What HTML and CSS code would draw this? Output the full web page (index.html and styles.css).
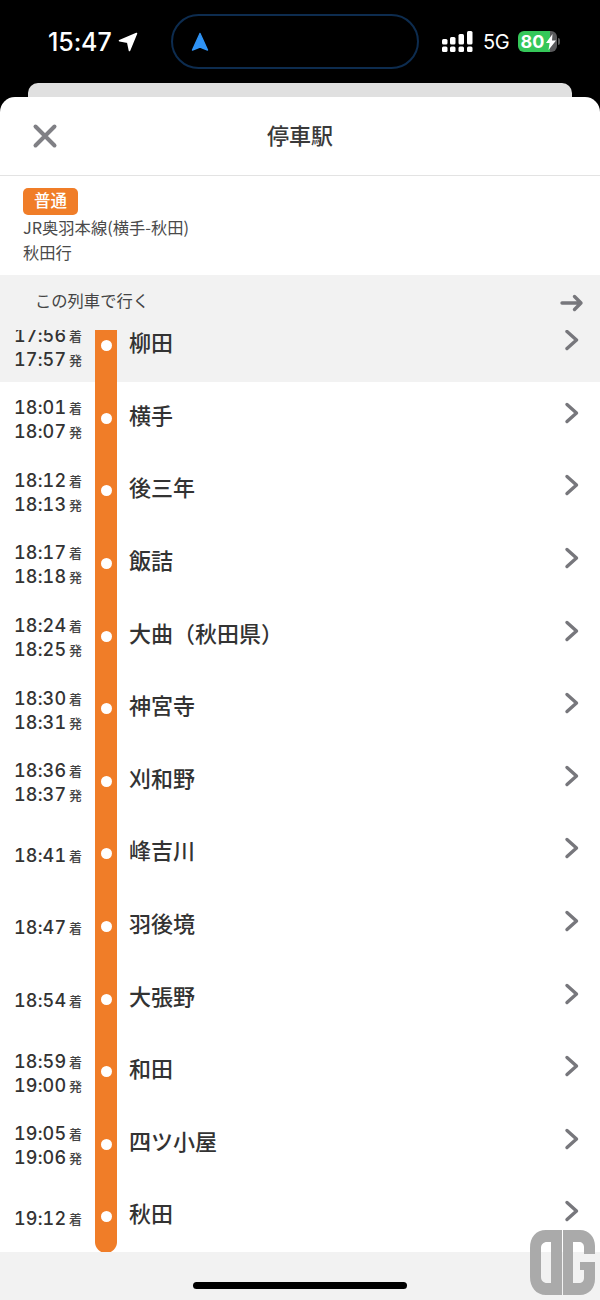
FILE: index.html
```html
<!DOCTYPE html>
<html lang="ja">
<head>
<meta charset="utf-8">
<title>停車駅</title>
<link rel="stylesheet" href="styles.css">
</head>
<body>
<div class="phone">
  <div class="status">
    <div class="clock">
      <span class="clock-time">15:47</span>
      <svg class="loc" width="20" height="20" viewBox="0 0 20 20"><path d="M18.500 1.500 1.500 8.800l8.200 1.300 1.800 8.400z" fill="#fff" stroke="#fff" stroke-width="1.600" stroke-linejoin="round"/></svg>
    </div>
    <div class="island">
      <svg width="18" height="20" viewBox="0 0 18 20"><path d="M9 1.500 1.500 18 9 15.200l7.500 2.800z" fill="#2f93f5" stroke="#2f93f5" stroke-width="1.400" stroke-linejoin="round"/></svg>
    </div>
    <div class="status-right">
      <svg width="31" height="21" viewBox="0 0 31 21" fill="#fff">
        <rect x="0" y="8" width="5.500" height="5.500" rx="1.500"/><rect x="0" y="15.500" width="5.500" height="5.500" rx="1.500"/>
        <rect x="8" y="6" width="5.500" height="7.500" rx="1.500"/><rect x="8" y="15.500" width="5.500" height="5.500" rx="1.500"/>
        <rect x="16.500" y="3" width="5.500" height="10.500" rx="1.500"/><rect x="16.500" y="15.500" width="5.500" height="5.500" rx="1.500"/>
        <rect x="25" y="0" width="5.500" height="13.500" rx="1.500"/><rect x="25" y="15.500" width="5.500" height="5.500" rx="1.500"/>
      </svg>
      <span class="net">5G</span>
      <div class="battery">
        <div class="batt-body"><span class="batt-num">80</span>
          <svg class="bolt" width="10" height="16" viewBox="0 0 10 16"><path d="M6.500 0 0 9h3.600L2.500 16 10 6.500H6z" fill="#fff"/></svg>
        </div>
        <div class="batt-cap"></div>
      </div>
    </div>
  </div>
  <div class="back-sheet"></div>
  <div class="sheet">
    <header class="head">
      <svg class="close" width="26" height="26" viewBox="0 0 26 26"><path d="M3.500 3.500l19 19M22.500 3.500l-19 19" stroke="#808085" stroke-width="4" stroke-linecap="round" fill="none"/></svg>
      <h1 class="title">停車駅</h1>
    </header>
    <section class="info">
      <span class="badge">普通</span>
      <p class="info-line">JR奥羽本線(横手-秋田)</p>
      <p class="info-line">秋田行</p>
    </section>
    <div class="board">
      <span class="board-label">この列車で行く</span>
      <svg width="24" height="18" viewBox="0 0 24 18"><path d="M2 9h19M14.500 2.500 21 9l-6.500 6.500" stroke="#77777c" stroke-width="3.400" stroke-linecap="round" stroke-linejoin="round" fill="none"/></svg>
    </div>
    <div class="list-clip">
      <ol class="list">
        <li class="row current"><div class="times"><div class="t">17:56<small>着</small></div><div class="t">17:57<small>発</small></div></div><div class="rail"><i class="dot"></i></div><div class="name">柳田</div><svg class="chev" width="16" height="22" viewBox="0 0 16 22"><path d="M3 2.500 12.500 11 3 19.500" /></svg></li>
        <li class="row"><div class="times"><div class="t">18:01<small>着</small></div><div class="t">18:07<small>発</small></div></div><div class="rail"><i class="dot"></i></div><div class="name">横手</div><svg class="chev" width="16" height="22" viewBox="0 0 16 22"><path d="M3 2.500 12.500 11 3 19.500" /></svg></li>
        <li class="row"><div class="times"><div class="t">18:12<small>着</small></div><div class="t">18:13<small>発</small></div></div><div class="rail"><i class="dot"></i></div><div class="name">後三年</div><svg class="chev" width="16" height="22" viewBox="0 0 16 22"><path d="M3 2.500 12.500 11 3 19.500" /></svg></li>
        <li class="row"><div class="times"><div class="t">18:17<small>着</small></div><div class="t">18:18<small>発</small></div></div><div class="rail"><i class="dot"></i></div><div class="name">飯詰</div><svg class="chev" width="16" height="22" viewBox="0 0 16 22"><path d="M3 2.500 12.500 11 3 19.500" /></svg></li>
        <li class="row"><div class="times"><div class="t">18:24<small>着</small></div><div class="t">18:25<small>発</small></div></div><div class="rail"><i class="dot"></i></div><div class="name">大曲（秋田県）</div><svg class="chev" width="16" height="22" viewBox="0 0 16 22"><path d="M3 2.500 12.500 11 3 19.500" /></svg></li>
        <li class="row"><div class="times"><div class="t">18:30<small>着</small></div><div class="t">18:31<small>発</small></div></div><div class="rail"><i class="dot"></i></div><div class="name">神宮寺</div><svg class="chev" width="16" height="22" viewBox="0 0 16 22"><path d="M3 2.500 12.500 11 3 19.500" /></svg></li>
        <li class="row"><div class="times"><div class="t">18:36<small>着</small></div><div class="t">18:37<small>発</small></div></div><div class="rail"><i class="dot"></i></div><div class="name">刈和野</div><svg class="chev" width="16" height="22" viewBox="0 0 16 22"><path d="M3 2.500 12.500 11 3 19.500" /></svg></li>
        <li class="row"><div class="times"><div class="t">18:41<small>着</small></div></div><div class="rail"><i class="dot"></i></div><div class="name">峰吉川</div><svg class="chev" width="16" height="22" viewBox="0 0 16 22"><path d="M3 2.500 12.500 11 3 19.500" /></svg></li>
        <li class="row"><div class="times"><div class="t">18:47<small>着</small></div></div><div class="rail"><i class="dot"></i></div><div class="name">羽後境</div><svg class="chev" width="16" height="22" viewBox="0 0 16 22"><path d="M3 2.500 12.500 11 3 19.500" /></svg></li>
        <li class="row"><div class="times"><div class="t">18:54<small>着</small></div></div><div class="rail"><i class="dot"></i></div><div class="name">大張野</div><svg class="chev" width="16" height="22" viewBox="0 0 16 22"><path d="M3 2.500 12.500 11 3 19.500" /></svg></li>
        <li class="row"><div class="times"><div class="t">18:59<small>着</small></div><div class="t">19:00<small>発</small></div></div><div class="rail"><i class="dot"></i></div><div class="name">和田</div><svg class="chev" width="16" height="22" viewBox="0 0 16 22"><path d="M3 2.500 12.500 11 3 19.500" /></svg></li>
        <li class="row"><div class="times"><div class="t">19:05<small>着</small></div><div class="t">19:06<small>発</small></div></div><div class="rail"><i class="dot"></i></div><div class="name">四ツ小屋</div><svg class="chev" width="16" height="22" viewBox="0 0 16 22"><path d="M3 2.500 12.500 11 3 19.500" /></svg></li>
        <li class="row last"><div class="times"><div class="t">19:12<small>着</small></div></div><div class="rail"><i class="dot"></i></div><div class="name">秋田</div><svg class="chev" width="16" height="22" viewBox="0 0 16 22"><path d="M3 2.500 12.500 11 3 19.500" /></svg></li>
      </ol>
    </div>
    <footer class="foot"><div class="home-bar"></div></footer>
  </div>
  <svg class="mark" width="66" height="66" viewBox="0 0 66 66" fill="#aaa">
    <path d="M32 0V65H16C6 65 0 57 0 47V18C0 7 6 0 16 0ZM21 12H17C13.500 12 11 14.500 11 18V47C11 50.500 13.500 53 17 53H21Z" fill-rule="evenodd"/>
    <path d="M33 0H50C59 0 65 7 65 16V24H54V17C54 14 52 12 49 12H43V53H49C52 53 54 51 54 48V40H50V32H65V49C65 58 59 65 50 65H33Z"/>
  </svg>
</div>
</body>
</html>
```

FILE: styles.css
```css
* { box-sizing: border-box; }
html, body { margin: 0; padding: 0; }
body {
  background: #000;
  font-family: "Noto Sans CJK JP", "Noto Sans", sans-serif;
  color: #333;
}
.phone { position: relative; width: 600px; height: 1300px; overflow: hidden; display: flex; flex-direction: column; background: #000; }

.status { height: 83px; flex: none; display: flex; align-items: flex-start; padding-top: 14px; color: #fff; }
.clock { width: 123px; margin-left: 48px; display: flex; align-items: center; height: 55px; gap: 6px; }
.clock-time { font-family: Inter, "Liberation Sans", sans-serif; font-size: 25px; font-weight: 500; letter-spacing: -.1px; }
.island { width: 248px; height: 55px; border: 2px solid #0d2c4f; border-radius: 28px; display: flex; align-items: center; padding-left: 18px; }
.status-right { margin-left: 23px; height: 55px; display: flex; align-items: center; }
.net { font-family: Inter, "Liberation Sans", sans-serif; font-size: 20px; margin-left: 10px; font-weight: 400; letter-spacing: -.3px; }
.battery { display: flex; align-items: center; margin-left: 9px; }
.batt-body { width: 39px; height: 21px; border-radius: 6px; background: linear-gradient(90deg, #35c759 0 32px, #5a5a5c 32px); display: flex; align-items: center; padding-left: 2px; position: relative; }
.batt-num { font-family: Inter, "Liberation Sans", sans-serif; font-size: 18px; font-weight: 700; color: #fff; line-height: 21px; }
.bolt { position: absolute; left: 28px; top: 3px; }
.batt-cap { width: 2px; height: 7px; background: #555; border-radius: 0 2px 2px 0; margin-left: 1px; }

.back-sheet { position: absolute; left: 28px; top: 83px; width: 544px; height: 20px; background: #e0e0e0; border-radius: 10px 10px 0 0; }
.sheet { position: relative; flex: none; margin-top: 14px; height: 1203px; background: #fff; border-radius: 15px 15px 0 0; display: flex; flex-direction: column; overflow: hidden; }

.head { height: 79px; flex: none; display: flex; align-items: center; justify-content: center; border-bottom: 1px solid #e3e3e3; position: relative; }
.close { position: absolute; left: 32px; top: 26px; }
.title { margin: 0 0 4px; font-size: 22px; font-weight: 500; color: #3a3a3a; line-height: 1; }

.info { height: 99px; flex: none; padding: 12px 23px 0; }
.badge { display: block; width: 55px; height: 27px; background: #f07d28; border-radius: 5px; color: #fff; font-size: 16.500px; font-weight: 500; text-align: center; line-height: 24px; }
.info-line { margin: 0; font-size: 16.300px; line-height: 25px; color: #4a4a4a; }

.board { height: 55px; flex: none; background: #f2f2f2; display: flex; align-items: center; justify-content: space-between; padding: 0 16px 0 35px; }
.board-label { font-size: 16.300px; line-height: 22px; color: #444; margin-bottom: 6px; }

.list-clip { height: 922px; flex: none; overflow: hidden; }
.list { list-style: none; margin: -20.600px 0 0; padding: 0; }
.row { height: 72.600px; display: grid; grid-template-columns: 95px 22px 1fr 36px; align-items: center; }
.row.current { background: #f2f2f2; }
.times { padding-left: 14px; }
.t { font-family: Inter, "Noto Sans CJK JP", sans-serif; font-size: 18px; font-weight: 500; font-variant-numeric: tabular-nums; letter-spacing: .15px; line-height: 24px; height: 24px; width: 68px; color: #333; white-space: nowrap; display: flex; align-items: center; justify-content: space-between; position: relative; top: 2px; }
.t small { font-family: "Noto Sans CJK JP", sans-serif; font-size: 13px; line-height: 16px; font-weight: 500; letter-spacing: 0; color: #444; }
.rail { align-self: stretch; background: #f07d28; display: flex; align-items: center; justify-content: center; }
.last .rail { border-radius: 0 0 11px 11px; }
.dot { width: 11px; height: 11px; border-radius: 50%; background: #fff; }
.name { padding-left: 12px; font-size: 22px; font-weight: 500; line-height: 30px; color: #333; position: relative; top: -4.500px; white-space: nowrap; }
.chev { position: relative; top: -5.500px; }
.chev path { fill: none; stroke: #77777c; stroke-width: 3.400; stroke-linecap: round; stroke-linejoin: round; }

.foot { flex: 1; background: #f2f2f2; position: relative; }
.home-bar { position: absolute; left: 193px; top: 30px; width: 214px; height: 7px; border-radius: 4px; background: #000; }

.mark { position: absolute; left: 530px; top: 1230px; }
```
